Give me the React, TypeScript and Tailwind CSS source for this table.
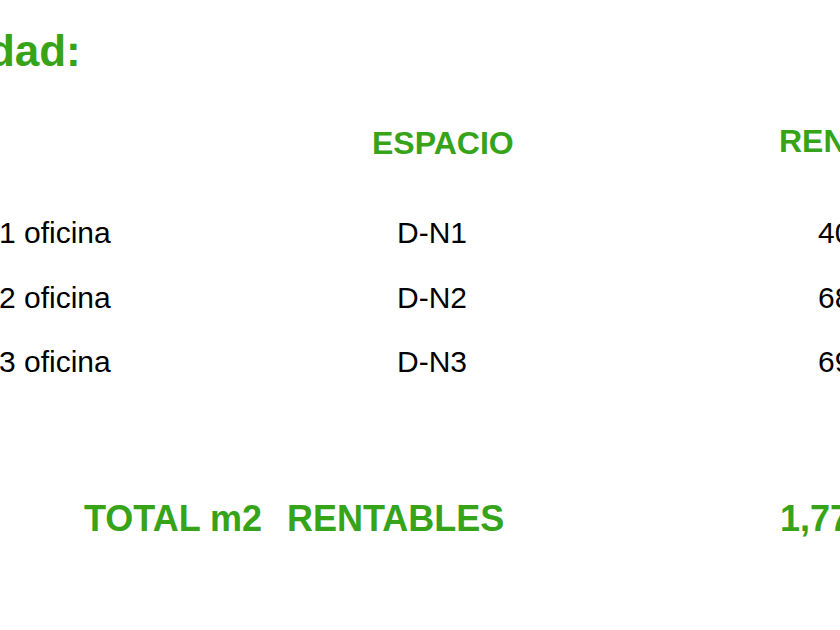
export default function App() {
  const rows = [
    { name: '1 oficina', space: 'D-N1', area: '40' },
    { name: '2 oficina', space: 'D-N2', area: '68' },
    { name: '3 oficina', space: 'D-N3', area: '69' },
  ];

  return (
    <div className="w-[840px] h-[630px] overflow-hidden bg-white font-['Liberation_Sans',Arial,sans-serif] whitespace-nowrap">
      {/* Slide title, cut on the left */}
      <h1 className="mt-[29px] -ml-[237px] text-[44px] leading-none font-bold text-[#36a318]">Disponibilidad:</h1>

      {/* Column headings */}
      <div className="mt-[54px] flex items-start text-[32px] leading-none font-bold text-[#36a318]">
        <div className="w-[372px] shrink-0" />
        <div className="w-[407px] shrink-0">ESPACIO</div>
        <div className="-mt-[2px] shrink-0">RENTABLES</div>
      </div>

      {/* Rows */}
      <div className="mt-[59px] flex flex-col gap-[34.5px] text-[30px] leading-none text-black">
        {rows.map((r) => (
          <div key={r.space} className="flex">
            <div className="w-[398px] shrink-0 -ml-[1px]">{r.name}</div>
            <div className="w-[421px] shrink-0">{r.space}</div>
            <div className="shrink-0">{r.area}.00</div>
          </div>
        ))}
      </div>

      {/* Total */}
      <div className="mt-[124px] flex text-[36px] leading-none font-bold text-[#36a318]">
        <div className="w-[84px] shrink-0" />
        <div className="w-[203px] shrink-0">TOTAL m2</div>
        <div className="w-[493px] shrink-0">RENTABLES</div>
        <div className="shrink-0">1,777.00</div>
      </div>
    </div>
  );
}
